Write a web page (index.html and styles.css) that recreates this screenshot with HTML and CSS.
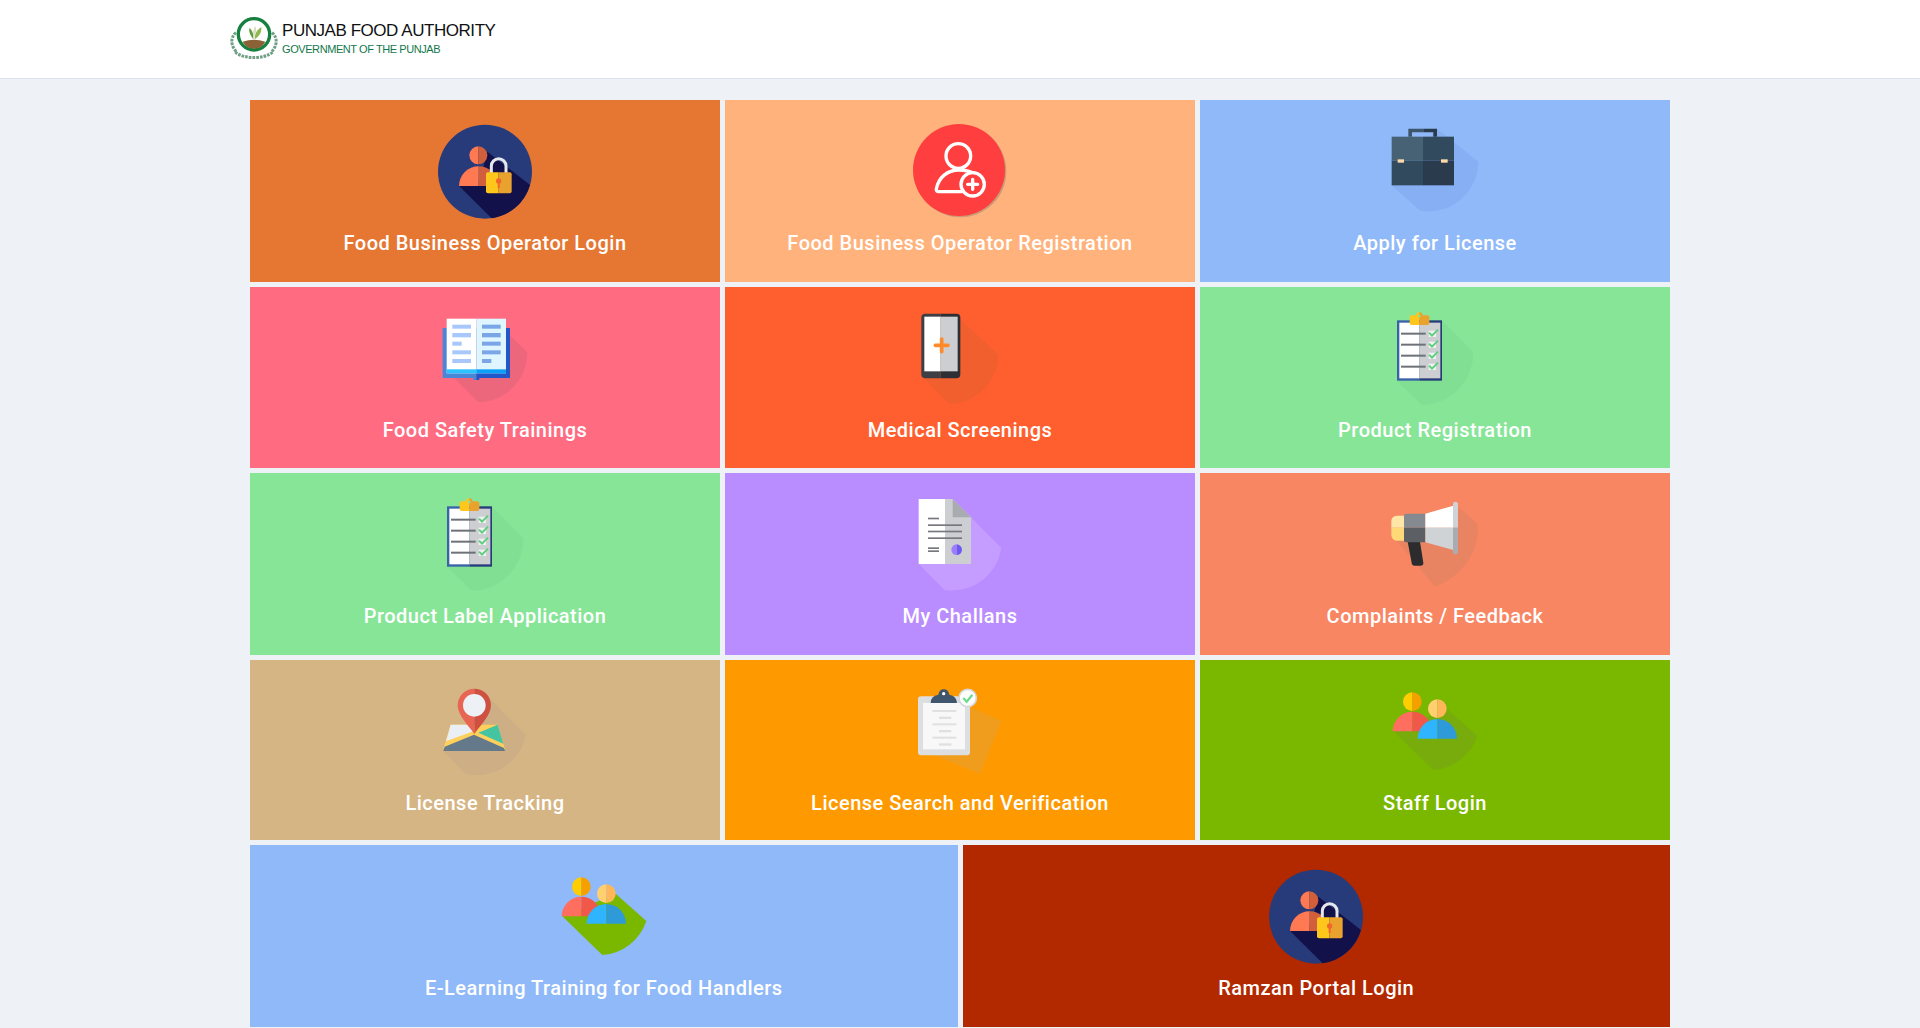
FILE: index.html
```html
<!DOCTYPE html>
<html lang="en">
<head>
<meta charset="utf-8">
<title>Punjab Food Authority</title>
<link rel="stylesheet" href="styles.css">
</head>
<body>
<header class="topbar">
  <a class="brand" href="#">
    <svg class="brand-mark" viewBox="84 45 156 132" aria-hidden="true">
      <g fill="none" stroke="#6f9f85" stroke-width="9" stroke-dasharray="8 3">
        <path d="M108 98 C90 112 92 140 110 155"/>
        <path d="M216 98 C234 112 232 140 214 155"/>
        <path d="M106 156 C128 178 196 178 218 156"/>
      </g>
      <circle cx="162" cy="103" r="47" fill="#fff" stroke="#16803f" stroke-width="10"/>
      <path d="M128 125 Q162 114 196 125 Q186 145 162 146 Q138 145 128 125Z" fill="#8a6236"/>
      <path d="M160 118 C150 105 146 95 148 84 C156 90 162 102 160 118Z" fill="#5f9e3e"/>
      <path d="M164 118 C164 100 172 88 184 82 C186 98 176 110 164 118Z" fill="#8fb84e"/>
      <path d="M161 112 C158 100 160 85 166 78 C170 90 168 102 161 112Z" fill="#d8dcc0"/>
    </svg>
    <span class="brand-text">
      <span class="brand-name">PUNJAB FOOD AUTHORITY</span>
      <span class="brand-sub">GOVERNMENT OF THE PUNJAB</span>
    </span>
  </a>
</header>

<main class="board">
  <div class="row">
    <a class="tile c-orange" href="#">
      <svg class="icon" viewBox="75 45 360 330" aria-hidden="true">
        <circle cx="255" cy="215" r="141" fill="#273b7a"/>
        <path d="M177 258 L275 355 A141 141 0 0 0 390 255 L262 155 L240 240Z" fill="#121149"/>
        <path d="M235 139 a27 27 0 0 0 0 54Z" fill="#ff7952"/><path d="M235 139 a27 27 0 0 1 0 54Z" fill="#d15f3c"/>
        <path d="M236 199 a59 59 0 0 0 -59 59 h59Z" fill="#ff7952"/><path d="M236 199 a59 59 0 0 1 59 59 h-59Z" fill="#d15f3c"/>
        <path d="M274 225 V198 a22 22 0 0 1 44 0 V225" fill="none" stroke="#e4e7eb" stroke-width="9"/>
        <path d="M264 217 H296 V280 H264 a6 6 0 0 1 -6 -6 V223 a6 6 0 0 1 6 -6Z" fill="#ffc61b"/>
        <path d="M296 217 H329 a6 6 0 0 1 6 6 V274 a6 6 0 0 1 -6 6 H296Z" fill="#eaa22f"/>
        <circle cx="296" cy="243" r="8" fill="#f1682a"/><rect x="293" y="245" width="6" height="19" fill="#f1682a"/>
      </svg>
      <span class="label">Food Business Operator Login</span>
    </a>
    <a class="tile c-peach" href="#">
      <svg class="icon" viewBox="120 45 360 330" aria-hidden="true">
        <circle cx="301" cy="214" r="138" fill="#c99a75"/>
        <circle cx="297" cy="210" r="138" fill="#ff3f3f"/>
        <g fill="none" stroke="#fff" stroke-width="10" stroke-linecap="round">
          <circle cx="295" cy="168" r="37"/>
          <path d="M305 275 H236 q-8 0 -7 -8 C236 232 262 210 297 210 q30 0 50 14"/>
          <circle cx="338" cy="253" r="35" fill="#ff3f3f"/>
          <path d="M323 253 H353 M338 238 V268"/>
        </g>
      </svg>
      <span class="label">Food Business Operator Registration</span>
    </a>
    <a class="tile c-blue" href="#">
      <svg class="icon" viewBox="105 45 360 330" aria-hidden="true">
        <path d="M291 86 L415 185 A150 150 0 0 1 240 332 L155 256Z" fill="#86b0f3"/>
        <path d="M205 110 V86 H250 V97 H216 V110Z" fill="#3d566c"/><path d="M250 86 H291 V110 H280 V97 H250Z" fill="#2b3b4e"/>
        <rect x="155" y="110" width="94" height="72" fill="#476175"/>
        <rect x="249" y="110" width="93" height="72" fill="#324a5e"/>
        <rect x="155" y="182" width="94" height="74" fill="#324a5e"/>
        <rect x="249" y="182" width="93" height="74" fill="#2b3b4e"/>
        <rect x="173" y="178" width="19" height="10" fill="#ffd8a8"/>
        <rect x="303" y="178" width="20" height="10" fill="#ffd8a8"/>
      </svg>
      <span class="label">Apply for License</span>
    </a>
  </div>

  <div class="row">
    <a class="tile c-pink" href="#">
      <svg class="icon" viewBox="45 4 360 330" aria-hidden="true">
        <path d="M300 105 L352 155 A150 150 0 0 1 205 305 L130 230Z" fill="#ec677c"/>
        <path d="M98 82 H199 V238 H190 V232 H98Z" fill="#4a86d8"/><path d="M199 82 H300 V232 H208 V238 H199Z" fill="#2356c8"/>
        <rect x="110" y="54" width="89" height="164" fill="#fff"/><rect x="199" y="54" width="89" height="164" fill="#dff5ff"/>
        <rect x="110" y="206" width="89" height="12" fill="#2cc1ff"/><rect x="199" y="206" width="89" height="12" fill="#0da0f8"/>
        <g fill="#a8c8fb"><rect x="127" y="72" width="56" height="12"/><rect x="127" y="97" width="56" height="13"/><rect x="127" y="123" width="28" height="12"/><rect x="127" y="149" width="56" height="12"/><rect x="127" y="175" width="56" height="12"/></g>
        <g fill="#7aa6e8"><rect x="216" y="72" width="56" height="12"/><rect x="216" y="97" width="56" height="13"/><rect x="216" y="123" width="56" height="12"/><rect x="216" y="149" width="56" height="12"/><rect x="216" y="175" width="28" height="12"/></g>
      </svg>
      <span class="label">Food Safety Trainings</span>
    </a>
    <a class="tile c-flame" href="#">
      <svg class="icon" viewBox="60 4 360 330" aria-hidden="true">
        <path d="M241 55 L355 162 A150 150 0 0 1 208 310 L124 225Z" fill="#f25f2f"/>
        <path d="M182 39 H136 a12 12 0 0 0 -12 12 V221 a12 12 0 0 0 12 12 H182Z" fill="#3d3f45"/>
        <path d="M182 39 H229 a12 12 0 0 1 12 12 V221 a12 12 0 0 1 -12 12 H182Z" fill="#2d2f34"/>
        <rect x="133" y="48" width="49" height="164" fill="#fff"/><rect x="182" y="48" width="51" height="164" fill="#ccced2"/>
        <path d="M166 134 H204 M185 115 V153" stroke="#ff8a2a" stroke-width="11" stroke-linecap="round"/>
      </svg>
      <span class="label">Medical Screenings</span>
    </a>
    <a class="tile c-green" href="#">
      <svg class="icon" viewBox="45 4 360 330" aria-hidden="true">
        <path d="M246 60 L340 155 A155 155 0 0 1 185 312 L111 240Z" fill="#80df93"/>
        <rect x="111" y="59" width="67" height="181" fill="#3a62a8"/><rect x="178" y="59" width="68" height="181" fill="#273b7a"/>
        <rect x="118" y="66" width="60" height="167" fill="#fff"/><rect x="178" y="66" width="63" height="167" fill="#ccced2"/>
        <path d="M178 35 a10 10 0 0 0 -10 9 H155 a6 6 0 0 0 -6 6 V67 a6 6 0 0 0 6 6 H178Z" fill="#ffc61b"/>
        <path d="M178 35 a10 10 0 0 1 10 9 H202 a6 6 0 0 1 6 6 V67 a6 6 0 0 1 -6 6 H178Z" fill="#eaa22f"/>
        <circle cx="178" cy="46" r="4" fill="#86e49a"/>
        <g fill="#6e7278"><rect x="123" y="96" width="74" height="6"/><rect x="123" y="129" width="74" height="6"/><rect x="123" y="162" width="74" height="6"/><rect x="123" y="195" width="74" height="6"/></g>
        <g fill="#f1f1f1"><rect x="206" y="90" width="22" height="19"/><rect x="206" y="123" width="22" height="19"/><rect x="206" y="156" width="22" height="19"/><rect x="206" y="189" width="22" height="19"/></g>
        <g fill="none" stroke="#5ccf7c" stroke-width="6"><path d="M207 96 L216 105 L234 87"/><path d="M207 129 L216 138 L234 120"/><path d="M207 162 L216 171 L234 153"/><path d="M207 195 L216 204 L234 186"/></g>
      </svg>
      <span class="label">Product Registration</span>
    </a>
  </div>

  <div class="row">
    <a class="tile c-green" href="#">
      <svg class="icon" viewBox="45 4 360 330" aria-hidden="true">
        <path d="M246 60 L340 155 A155 155 0 0 1 185 312 L111 240Z" fill="#80df93"/>
        <rect x="111" y="59" width="67" height="181" fill="#3a62a8"/><rect x="178" y="59" width="68" height="181" fill="#273b7a"/>
        <rect x="118" y="66" width="60" height="167" fill="#fff"/><rect x="178" y="66" width="63" height="167" fill="#ccced2"/>
        <path d="M178 35 a10 10 0 0 0 -10 9 H155 a6 6 0 0 0 -6 6 V67 a6 6 0 0 0 6 6 H178Z" fill="#ffc61b"/>
        <path d="M178 35 a10 10 0 0 1 10 9 H202 a6 6 0 0 1 6 6 V67 a6 6 0 0 1 -6 6 H178Z" fill="#eaa22f"/>
        <circle cx="178" cy="46" r="4" fill="#86e49a"/>
        <g fill="#6e7278"><rect x="123" y="96" width="74" height="6"/><rect x="123" y="129" width="74" height="6"/><rect x="123" y="162" width="74" height="6"/><rect x="123" y="195" width="74" height="6"/></g>
        <g fill="#f1f1f1"><rect x="206" y="90" width="22" height="19"/><rect x="206" y="123" width="22" height="19"/><rect x="206" y="156" width="22" height="19"/><rect x="206" y="189" width="22" height="19"/></g>
        <g fill="none" stroke="#5ccf7c" stroke-width="6"><path d="M207 96 L216 105 L234 87"/><path d="M207 129 L216 138 L234 120"/><path d="M207 162 L216 171 L234 153"/><path d="M207 195 L216 204 L234 186"/></g>
      </svg>
      <span class="label">Product Label Application</span>
    </a>
    <a class="tile c-purple" href="#">
      <svg class="icon" viewBox="60 -6 360 330" aria-hidden="true">
        <path d="M273 82 L364 173 A150 150 0 0 1 193 300 L116 222Z" fill="#c59cff"/>
        <path d="M116 27 H195 V222 H116Z" fill="#fff"/>
        <path d="M195 27 H218 L273 82 V222 H195Z" fill="#ccced2"/>
        <path d="M218 27 L273 82 H218Z" fill="#a8abb0"/>
        <g fill="#77787e"><rect x="144" y="83" width="33" height="5"/><rect x="144" y="103" width="102" height="5"/><rect x="144" y="122" width="102" height="5"/><rect x="144" y="142" width="102" height="5"/><rect x="144" y="172" width="33" height="5"/><rect x="144" y="181" width="33" height="5"/></g>
        <path d="M230 163 a16 16 0 0 0 0 32Z" fill="#9c7cff"/><path d="M230 163 a16 16 0 0 1 0 32Z" fill="#6f5af0"/>
      </svg>
      <span class="label">My Challans</span>
    </a>
    <a class="tile c-salmon" href="#">
      <svg class="icon" viewBox="45 -6 360 330" aria-hidden="true">
        <path d="M294 50 L352 100 C365 190 290 270 225 290 L110 152Z" fill="#e98463"/>
        <path d="M135 77 H110 a16 16 0 0 0 -16 16 V113 H135Z" fill="#ffe6a8"/>
        <path d="M135 113 H94 V136 a16 16 0 0 0 16 16 H135Z" fill="#ffd878"/>
        <path d="M143 155 H180 L190 218 q1 9 -9 9 H164 q-8 0 -9 -8Z" fill="#2c2c2e"/>
        <path d="M196 71 H138 a6 6 0 0 0 -6 6 V113 H196Z" fill="#858a90"/>
        <path d="M196 113 H132 V151 a6 6 0 0 0 6 6 H196Z" fill="#5c5f64"/>
        <path d="M196 71 L280 47 V113 H196Z" fill="#fff"/>
        <path d="M196 113 H280 V180 L196 157Z" fill="#d0d3d6"/>
        <path d="M279 113 V43 a7 7 0 0 1 15 0 V113Z" fill="#d0d3d6"/>
        <path d="M279 113 H294 V185 a7 7 0 0 1 -15 0Z" fill="#a9acb0"/>
      </svg>
      <span class="label">Complaints / Feedback</span>
    </a>
  </div>

  <div class="row row-short">
    <a class="tile c-tan" href="#">
      <svg class="icon" viewBox="45 -1 360 330" aria-hidden="true">
        <path d="M235 65 L348 178 A150 150 0 0 1 165 295 L100 227Z" fill="#cdae85"/>
        <path d="M122 148 H263 L285 222 H100Z" fill="#ffd05b"/>
        <path d="M122 148 H190 V168 L108 198Z" fill="#e9eff4"/>
        <path d="M205 172 L263 148 L280 205Z" fill="#44c4a1"/>
        <path d="M192 178 L104 214 L100 227 H285 L282 218Z" fill="#64798a"/>
        <path d="M193 40 a50 50 0 0 0 -50 50 C143 120 175 150 193 176Z" fill="#e76552"/>
        <path d="M193 40 a50 50 0 0 1 50 50 C243 120 211 150 193 176Z" fill="#ce5040"/>
        <circle cx="193" cy="90" r="34" fill="#edf0f4"/>
      </svg>
      <span class="label">License Tracking</span>
    </a>
    <a class="tile c-amber" href="#">
      <svg class="icon" viewBox="60 -1 360 330" aria-hidden="true">
        <path d="M270 95 L365 137 L300 296 L150 235 H270Z" fill="#f09c1c"/>
        <rect x="114" y="63" width="156" height="177" rx="9" fill="#dcdee0"/>
        <rect x="129" y="83" width="126" height="139" fill="#f8f8f8"/>
        <path d="M152 83 Q152 62 175 58 Q178 42 191 42 Q205 42 208 58 Q230 62 231 83Z" fill="#3f566c"/>
        <circle cx="191" cy="55" r="5" fill="#fff"/>
        <g fill="#e0e0e0"><rect x="157" y="104" width="72" height="6"/><rect x="177" y="124" width="37" height="7"/><rect x="157" y="144" width="72" height="6"/><rect x="177" y="164" width="37" height="7"/><rect x="157" y="184" width="72" height="6"/><rect x="177" y="204" width="37" height="7"/></g>
        <circle cx="263" cy="68" r="26" fill="#fff" stroke="#d5d7da" stroke-width="5"/>
        <path d="M250 68 L260 79 L277 58" fill="none" stroke="#6fdc8c" stroke-width="7"/>
      </svg>
      <span class="label">License Search and Verification</span>
    </a>
    <a class="tile c-lime" href="#">
      <svg class="icon" viewBox="45 -1 360 330" aria-hidden="true">
        <path d="M260 100 L352 182 A150 150 0 0 1 220 284 L100 168Z" fill="#78ac0c"/>
        <path d="M157 51 a28 28 0 0 0 0 56Z" fill="#ffcd00"/><path d="M157 51 a28 28 0 0 1 0 56Z" fill="#f6a000"/>
        <path d="M157 109 a59 59 0 0 0 -59 59 h59Z" fill="#ff6e5f"/><path d="M157 109 a59 59 0 0 1 59 59 h-59Z" fill="#f0584a"/>
        <path d="M232 72 a28 28 0 0 0 0 56Z" fill="#ffcf70"/><path d="M232 72 a28 28 0 0 1 0 56Z" fill="#ffb75a"/>
        <path d="M232 131 a59 59 0 0 0 -59 59 h59Z" fill="#2fb4ff"/><path d="M232 131 a59 59 0 0 1 59 59 h-59Z" fill="#2e9ad8"/>
      </svg>
      <span class="label">Staff Login</span>
    </a>
  </div>

  <div class="row">
    <a class="tile c-blue" href="#">
      <svg class="icon" viewBox="45 -1 360 330" aria-hidden="true">
        <path d="M260 100 L352 182 A150 150 0 0 1 220 284 L100 168Z" fill="#7ab800"/>
        <path d="M157 51 a28 28 0 0 0 0 56Z" fill="#ffcd00"/><path d="M157 51 a28 28 0 0 1 0 56Z" fill="#f6a000"/>
        <path d="M157 109 a59 59 0 0 0 -59 59 h59Z" fill="#ff6e5f"/><path d="M157 109 a59 59 0 0 1 59 59 h-59Z" fill="#f0584a"/>
        <path d="M232 72 a28 28 0 0 0 0 56Z" fill="#ffcf70"/><path d="M232 72 a28 28 0 0 1 0 56Z" fill="#ffb75a"/>
        <path d="M232 131 a59 59 0 0 0 -59 59 h59Z" fill="#2fb4ff"/><path d="M232 131 a59 59 0 0 1 59 59 h-59Z" fill="#2e9ad8"/>
      </svg>
      <span class="label">E-Learning Training for Food Handlers</span>
    </a>
    <a class="tile c-brick" href="#">
      <svg class="icon" viewBox="75 45 360 330" aria-hidden="true">
        <circle cx="255" cy="215" r="141" fill="#273b7a"/>
        <path d="M177 258 L275 355 A141 141 0 0 0 390 255 L262 155 L240 240Z" fill="#121149"/>
        <path d="M235 139 a27 27 0 0 0 0 54Z" fill="#ff7952"/><path d="M235 139 a27 27 0 0 1 0 54Z" fill="#d15f3c"/>
        <path d="M236 199 a59 59 0 0 0 -59 59 h59Z" fill="#ff7952"/><path d="M236 199 a59 59 0 0 1 59 59 h-59Z" fill="#d15f3c"/>
        <path d="M274 225 V198 a22 22 0 0 1 44 0 V225" fill="none" stroke="#e4e7eb" stroke-width="9"/>
        <path d="M264 217 H296 V280 H264 a6 6 0 0 1 -6 -6 V223 a6 6 0 0 1 6 -6Z" fill="#ffc61b"/>
        <path d="M296 217 H329 a6 6 0 0 1 6 6 V274 a6 6 0 0 1 -6 6 H296Z" fill="#eaa22f"/>
        <circle cx="296" cy="243" r="8" fill="#f1682a"/><rect x="293" y="245" width="6" height="19" fill="#f1682a"/>
      </svg>
      <span class="label">Ramzan Portal Login</span>
    </a>
  </div>
</main>
</body>
</html>
```

FILE: styles.css
```css
* { box-sizing: border-box; }

html, body { margin: 0; height: 100%; }

body {
  background: #eef1f5;
  font-family: Roboto, "Liberation Sans", sans-serif;
  overflow: hidden;
}

.topbar {
  height: 79px;
  background: #fff;
  border-bottom: 1px solid #dde3ec;
  padding: 15px 0 0 228px;
}

.brand {
  display: inline-flex;
  align-items: flex-start;
  gap: 2px;
  text-decoration: none;
}

.brand-mark { width: 52px; height: 44px; display: block; }

.brand-text { display: flex; flex-direction: column; padding-top: 5px; }

.brand-name {
  font-family: "Liberation Sans", sans-serif;
  font-size: 17px;
  line-height: 21px;
  letter-spacing: -0.45px;
  color: #111;
  white-space: nowrap;
}

.brand-sub {
  font-family: "Liberation Sans", sans-serif;
  font-size: 11px;
  line-height: 16px;
  letter-spacing: -0.42px;
  color: #13774a;
  white-space: nowrap;
}

.board {
  width: 1420px;
  margin: 21px auto 0;
  display: flex;
  flex-direction: column;
  gap: 5px;
}

.row { display: flex; gap: 5px; height: 181.5px; }

.row-short { height: 180.5px; }

.tile {
  flex: 1 1 0;
  display: flex;
  flex-direction: column;
  align-items: center;
  padding-top: 15px;
  text-decoration: none;
}

.icon { width: 120px; height: 110px; display: block; overflow: visible; }

.label {
  margin-top: 6px;
  font-size: 20px;
  line-height: 24px;
  font-weight: 500;
  letter-spacing: 0.5px;
  color: #fff;
  white-space: nowrap;
}

.c-orange { background: #e67733; }
.c-peach { background: #ffb27b; }
.c-blue { background: #8fb9f8; }
.c-pink { background: #ff6b81; }
.c-flame { background: #ff5f2e; }
.c-green { background: #87e598; }
.c-purple { background: #b98cff; }
.c-salmon { background: #f98663; }
.c-tan { background: #d6b585; }
.c-amber { background: #ff9900; }
.c-lime { background: #7ab800; }
.c-brick { background: #b22900; }
```
